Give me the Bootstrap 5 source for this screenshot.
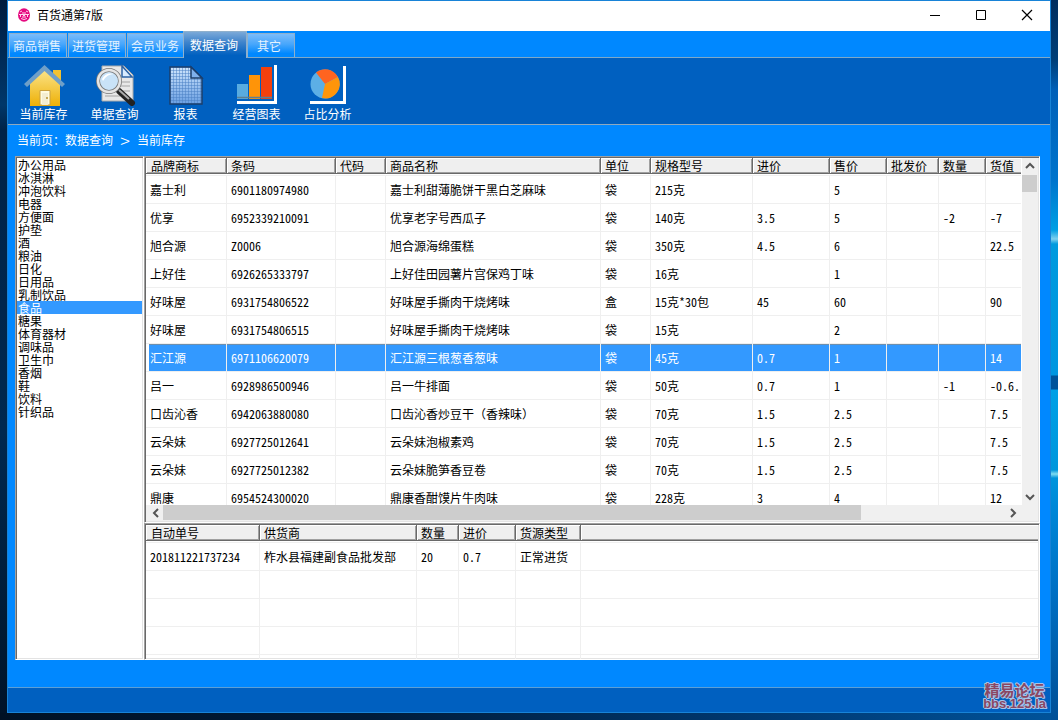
<!DOCTYPE html>
<html lang="zh-CN">
<head>
<meta charset="utf-8">
<meta name="viewport" content="width=device-width, initial-scale=1">
<title>百货通第7版</title>
<link href="https://cdn.jsdelivr.net/npm/bootstrap@5.3.0/dist/css/bootstrap.min.css" rel="stylesheet">
<style>
  :root { --face: #0088ff; --deep: #0060c0; --edge: #7fa9c9; --grid: #efefef; --pick: #3399ff; }
  body {
    height: 100vh; padding: 0 7px 7px; overflow: hidden;
    font: 12px/16px "Noto Sans CJK SC", sans-serif; color: #000;
    font-feature-settings: "hwid" 1;
    background:
      linear-gradient(180deg, #002d5e 0, #003f78 60px, #0060b8 90px, #0074cc 180px, #009fe4 230px, #7fd0ee 239px, #009ade 244px, #0096e0 375px, #00539a 376px, #00539a 389px, #00a0e6 390px, #0096dc 470px, #80dcf0 474px, #0094dc 478px, #0088d8 506px, #0070c4 590px, #004f96 100%) right top / 7px 100% no-repeat,
      linear-gradient(90deg, #001125, #001c3a 35%, #003b75 75%, #00539a) left bottom / 100% 7px no-repeat,
      linear-gradient(180deg, #001c3e, #00376a 105px, #002348 130px, #00284f 60%, #001227) left top / 7px 100% no-repeat;
  }
  button { font: inherit; color: inherit; font-feature-settings: inherit; background: none; border: 0; padding: 0; }
  .app { background: var(--face); border: 1px solid #1883d7; }
  .titlebar { height: 30px; background: #fff; padding: 0 0 2px 9px; gap: 6px; }
  .winbtn { width: 46px; height: 28px; display: flex; align-items: center; justify-content: center; }
  .tabs { height: 27px; padding: 0 1px; border-bottom: 1px solid var(--edge); }
  .tabs button {
    height: 24px; padding: 0 5px 0 3px; color: #e4f2ff; margin-right: 1px;
    border: 1px solid #8fb0cc; border-bottom: 0;
    background: linear-gradient(#7cbcfa, #46a6fc 45%, var(--face) 85%);
  }
  .tabs button.on {
    height: 27px; padding: 0 8px 0 6px; margin: 0 0 -1px -3px; color: #fff;
    background: linear-gradient(#7ba9d8, #3f84cc 40%, var(--deep) 90%);
  }
  .tabs button.wide { padding: 0 13px 0 9px; }
  .tools { background: var(--deep); height: 68px; border-bottom: 1px solid #8fa9be; padding-top: 6px; }
  .tools button { width: 71px; color: #fff; }
  .tools svg { display: block; margin: 0 auto; width: 44px; height: 42px; }
  .crumb { height: 31px; padding-left: 9px; color: #fff; }
  .crumb a { color: #fff; text-decoration: none; }
  .crumb .sep { width: 24px; text-align: center; font-size: 18px; font-feature-settings: normal; font-weight: 300; }
  .work { padding: 0 10px 0 7px; min-height: 0; }
  .sunken {
    background: #fff; border: 1px solid; border-color: #a0a0a0 #fff #fff #a0a0a0;
    box-shadow: inset 1px 1px #696969, inset -1px -1px #e3e3e3; padding: 1px 1px 1px 1px; overflow: hidden;
  }
  .cats { width: 129px; }
  .cats button { display: block; width: 100%; height: 13px; line-height: 13px; text-align: left; padding-left: 1px; }
  .cats .on { background: var(--pick); color: #fff; }
  .detail { height: 137px; flex: none; }
  .pane { min-height: 0; overflow: hidden; }
  .sheet { width: 100%; table-layout: fixed; border-collapse: separate; border-spacing: 0; white-space: nowrap; }
  .sheet th { padding: 0; height: 18px; vertical-align: top; font-weight: 400; border-bottom: 1px solid var(--grid); }
  .sheet th div {
    height: 16px; line-height: 16px; padding-left: 4px; background: #efefef; overflow: hidden;
    border-right: 1px solid #696969; border-bottom: 1px solid #696969;
    box-shadow: inset 1px 1px #fff, inset -1px -1px #a0a0a0;
  }
  .sheet th:first-child div { padding-left: 5px; }
  .sheet th:last-child div { border-right: 0; box-shadow: inset 1px 1px #fff, inset 0 -1px #a0a0a0; }
  .sheet td { height: 28px; padding: 1px 0 0 4px; border-right: 1px solid var(--grid); border-bottom: 1px solid var(--grid); overflow: hidden; }
  .sheet td:last-child { border-right: 0; }
  .sheet .full { font-feature-settings: normal; }
  .sheet .on td { color: #fff; background: var(--pick); background-clip: padding-box; box-shadow: inset 0 1px #6d8fae; }
  .sheet .on td:first-child { box-shadow: inset 3px 0 #fff, inset 0 1px #6d8fae; }
  .vbar { width: 17px; background: #f0f0f0; border-left: 1px solid #fff; }
  .vbar i { height: 17px; background: #cdcdcd; margin-right: 1px; }
  .hbar { height: 16px; background: #f0f0f0; padding-right: 17px; }
  .hbar i { width: 83%; height: 15px; background: #cdcdcd; }
  .arrow { width: 16px; height: 17px; line-height: 0; flex: none; }
  .hbar .arrow { width: 17px; height: 16px; }
  .arrow svg { fill: none; stroke: #555; stroke-width: 2; }
  .foot { height: 25px; margin-top: 27px; background: var(--deep); border-top: 1px solid #5d9fd6; }
  .stamp {
    position: absolute; right: 12px; bottom: 9px; text-align: center; line-height: 15px; font-size: 15px; font-weight: 700;
    color: #8a4763; text-shadow: 1px 0 #a9c3e6, -1px 0 #a9c3e6, 0 1px #a9c3e6, 0 -1px #a9c3e6, 1px 1px #a9c3e6, -1px -1px #a9c3e6;
    font-feature-settings: normal;
  }
  .stamp small { display: block; font: 700 13px/14px "Liberation Sans", sans-serif; }
</style>
</head>
<body>
<div class="app h-100 d-flex flex-column">
  <header class="titlebar d-flex align-items-center">
    <svg width="14" height="14" viewBox="0 0 14 14"><ellipse cx="7" cy="7" rx="6" ry="6.8" fill="#e5097f"/><path d="M3 4l2-1M11 4L9 3M2 6.500h10M5 5h4M3.500 7v2M10.500 7v2M5 9h4M4 10.500q3 2 6 0M6 7.500h2" stroke="#ffd4ec" fill="none"/></svg>
    <span class="me-auto">百货通第7版</span>
    <div class="d-flex">
      <button class="winbtn" aria-label="最小化"><svg width="12" height="12"><path d="M1 6.500h10" stroke="#000"/></svg></button>
      <button class="winbtn" aria-label="最大化"><svg width="12" height="12"><path d="M1.500 1.500h9v9h-9z" stroke="#000" fill="none"/></svg></button>
      <button class="winbtn" aria-label="关闭"><svg width="12" height="12"><path d="M1 1l10 10M11 1L1 11" stroke="#000" stroke-width="1.200"/></svg></button>
    </div>
  </header>

  <nav class="tabs d-flex align-items-end">
    <button>商品销售</button><button>进货管理</button><button>会员业务</button><button class="on">数据查询</button><button class="wide">其它</button>
  </nav>

  <div class="tools d-flex align-items-start">
    <button>
      <svg viewBox="0 0 44 42"><defs><linearGradient id="wall" x2="0" y2="1"><stop stop-color="#fbe58c"/><stop offset="1" stop-color="#eeb006"/></linearGradient></defs><path d="M31 6h8v15h-8z" fill="#f2c230"/><path d="M8 19L22.500 5 38 19v23H8z" fill="url(#wall)"/><path d="M22.500 1L2 20l3 3L22.500 7 40 23l3-3z" fill="#6f9fc8"/><path d="M18 26.500h10V41H18z" fill="#fffbe0" stroke="#c9a040"/><path d="M20 29h6v12h-6z" fill="#f3edd2"/><circle cx="25" cy="34" r="1" fill="#b59030"/></svg>
      当前库存
    </button>
    <button>
      <svg viewBox="0 0 44 42"><path d="M9 2h22l9 9v26H9z" fill="#e8e8e8" stroke="#aaa"/><path d="M29 2v11h10z" fill="#d9ecff" stroke="#2c63a5" stroke-width="1.500"/><path d="M26 18h11M27 22h10M12 32h15M30 27h7" stroke="#bbb" stroke-width="1.500"/><path d="M26 27l13 12" stroke="#222" stroke-width="6" stroke-linecap="round"/><path d="M26 26l10 9" stroke="#aaa" stroke-width="2"/><circle cx="16" cy="17" r="11" fill="#c9e3f8" stroke="#777" stroke-width="4"/><circle cx="16" cy="17" r="11" fill="none" stroke="#e5e5e5" stroke-width="2.500"/><path d="M9 15q4-7 12-5-7 0-11 7z" fill="#fff"/></svg>
      单据查询
    </button>
    <button>
      <svg viewBox="0 0 44 42"><defs><linearGradient id="sheetfill" x2="0" y2="1"><stop stop-color="#d0e6fc"/><stop offset="1" stop-color="#6a9fe2"/></linearGradient><pattern id="dots" width="3" height="3" patternUnits="userSpaceOnUse"><path d="M0 .5h3M.5 0v3" stroke="#4a7fc4" stroke-opacity=".5"/></pattern></defs><path d="M6 3h21l11 11v26H6z" fill="url(#sheetfill)"/><path d="M6 3h21l11 11v26H6z" fill="url(#dots)" stroke="#1b3e6b" stroke-width="1.500"/><path d="M27 3v11h11z" fill="#7eb0ec" stroke="#1b3e6b" stroke-width="1.500"/></svg>
      报表
    </button>
    <button>
      <svg viewBox="0 0 44 42"><path d="M2 20h11v15H2z" fill="#58abe0"/><path d="M14 11h11v24H14z" fill="#ff9408"/><path d="M26 3h11v32H26z" fill="#f4400c"/><path d="M2 33.500h35" stroke="#5d7f94" stroke-width="1.500"/><path d="M2 38.500h38.500V1" fill="none" stroke="#fff" stroke-width="3"/></svg>
      经营图表
    </button>
    <button>
      <svg viewBox="0 0 44 42"><circle cx="19" cy="20" r="14.500" fill="#5cafe6"/><path d="M19 20L10 8.500A14.500 14.500 0 0 1 32 13z" fill="#ff6420"/><path d="M19 20L32 13A14.500 14.500 0 0 1 16 34z" fill="#ff950a"/><path d="M4 38.500h34.500V2" fill="none" stroke="#fff" stroke-width="3"/></svg>
      占比分析
    </button>
  </div>

  <nav class="crumb d-flex align-items-center"><span>当前页：</span><a href="#">数据查询</a><span class="sep">&gt;</span><a href="#">当前库存</a></nav>

  <main class="work d-flex flex-grow-1">
    <div class="cats sunken flex-shrink-0">
      <button>办公用品</button><button>冰淇淋</button><button>冲泡饮料</button><button>电器</button><button>方便面</button><button>护垫</button><button>酒</button><button>粮油</button><button>日化</button><button>日用品</button><button>乳制饮品</button><button class="on">食品</button><button>糖果</button><button>体育器材</button><button>调味品</button><button>卫生巾</button><button>香烟</button><button>鞋</button><button>饮料</button><button>针织品</button>
    </div>
    <div class="d-flex flex-column flex-grow-1 pane">
      <section class="sunken flex-grow-1 pane d-flex flex-column">
        <div class="d-flex flex-grow-1 pane">
          <div class="pane flex-grow-1">
            <table class="sheet">
              <colgroup><col width="81"><col width="109"><col width="50"><col width="215"><col width="50"><col width="102"><col width="77"><col width="57"><col width="52"><col width="47"><col></colgroup>
              <thead><tr><th><div>品牌商标</div></th><th><div>条码</div></th><th><div>代码</div></th><th><div>商品名称</div></th><th><div>单位</div></th><th><div>规格型号</div></th><th><div>进价</div></th><th><div>售价</div></th><th><div>批发价</div></th><th><div>数量</div></th><th><div>货值</div></th></tr></thead>
              <tbody>
                <tr><td>嘉士利</td><td>6901180974980</td><td></td><td>嘉士利甜薄脆饼干黑白芝麻味</td><td>袋</td><td>215克</td><td></td><td>5</td><td></td><td></td><td></td></tr>
                <tr><td>优享</td><td>6952339210091</td><td></td><td>优享老字号西瓜子</td><td>袋</td><td>140克</td><td>3.5</td><td>5</td><td></td><td>-2</td><td>-7</td></tr>
                <tr><td>旭合源</td><td>Z0006</td><td></td><td>旭合源海绵蛋糕</td><td>袋</td><td>350克</td><td>4.5</td><td>6</td><td></td><td></td><td>22.5</td></tr>
                <tr><td>上好佳</td><td>6926265333797</td><td></td><td>上好佳田园薯片宫保鸡丁味</td><td>袋</td><td>16克</td><td></td><td>1</td><td></td><td></td><td></td></tr>
                <tr><td>好味屋</td><td>6931754806522</td><td></td><td>好味屋手撕肉干烧烤味</td><td>盒</td><td>15克*30包</td><td>45</td><td>60</td><td></td><td></td><td>90</td></tr>
                <tr><td>好味屋</td><td>6931754806515</td><td></td><td>好味屋手撕肉干烧烤味</td><td>袋</td><td>15克</td><td></td><td>2</td><td></td><td></td><td></td></tr>
                <tr class="on"><td>汇江源</td><td>6971106620079</td><td></td><td>汇江源三根葱香葱味</td><td>袋</td><td>45克</td><td>0.7</td><td>1</td><td></td><td></td><td>14</td></tr>
                <tr><td>吕一</td><td>6928986500946</td><td></td><td>吕一牛排面</td><td>袋</td><td>50克</td><td>0.7</td><td>1</td><td></td><td>-1</td><td>-0.6.</td></tr>
                <tr><td>口齿沁香</td><td>6942063880080</td><td></td><td class="full">口齿沁香炒豆干（香辣味）</td><td>袋</td><td>70克</td><td>1.5</td><td>2.5</td><td></td><td></td><td>7.5</td></tr>
                <tr><td>云朵妹</td><td>6927725012641</td><td></td><td>云朵妹泡椒素鸡</td><td>袋</td><td>70克</td><td>1.5</td><td>2.5</td><td></td><td></td><td>7.5</td></tr>
                <tr><td>云朵妹</td><td>6927725012382</td><td></td><td>云朵妹脆笋香豆卷</td><td>袋</td><td>70克</td><td>1.5</td><td>2.5</td><td></td><td></td><td>7.5</td></tr>
                <tr><td>鼎康</td><td>6954524300020</td><td></td><td>鼎康香酣馍片牛肉味</td><td>袋</td><td>228克</td><td>3</td><td>4</td><td></td><td></td><td>12</td></tr>
              </tbody>
            </table>
          </div>
          <div class="vbar flex-shrink-0 d-flex flex-column">
            <button class="arrow" aria-label="向上"><svg width="16" height="16"><path d="M4 10l4-4 4 4"/></svg></button>
            <i></i>
            <button class="arrow mt-auto" aria-label="向下"><svg width="16" height="16"><path d="M4 6l4 4 4-4"/></svg></button>
          </div>
        </div>
        <div class="hbar d-flex flex-shrink-0">
          <button class="arrow" aria-label="向左"><svg width="16" height="16"><path d="M11 4L7 8l4 4"/></svg></button>
          <div class="flex-grow-1"><i class="d-block"></i></div>
          <button class="arrow" aria-label="向右"><svg width="16" height="16"><path d="M6 4l4 4-4 4"/></svg></button>
        </div>
      </section>
      <section class="sunken detail">
        <table class="sheet">
          <colgroup><col width="114"><col width="157"><col width="42"><col width="57"><col width="65"><col></colgroup>
          <thead><tr><th><div>自动单号</div></th><th><div>供货商</div></th><th><div>数量</div></th><th><div>进价</div></th><th><div>货源类型</div></th><th><div></div></th></tr></thead>
          <tbody>
            <tr><td>201811221737234</td><td>柞水县福建副食品批发部</td><td>20</td><td>0.7</td><td>正常进货</td><td></td></tr>
            <tr><td></td><td></td><td></td><td></td><td></td><td></td></tr>
            <tr><td></td><td></td><td></td><td></td><td></td><td></td></tr>
            <tr><td></td><td></td><td></td><td></td><td></td><td></td></tr>
            <tr><td></td><td></td><td></td><td></td><td></td><td></td></tr>
          </tbody>
        </table>
      </section>
    </div>
  </main>
  <footer class="foot flex-shrink-0"></footer>
</div>
<div class="stamp">精易论坛<small>bbs.125.la</small></div>
<script src="https://cdn.jsdelivr.net/npm/bootstrap@5.3.0/dist/js/bootstrap.bundle.min.js"></script>
</body>
</html>
